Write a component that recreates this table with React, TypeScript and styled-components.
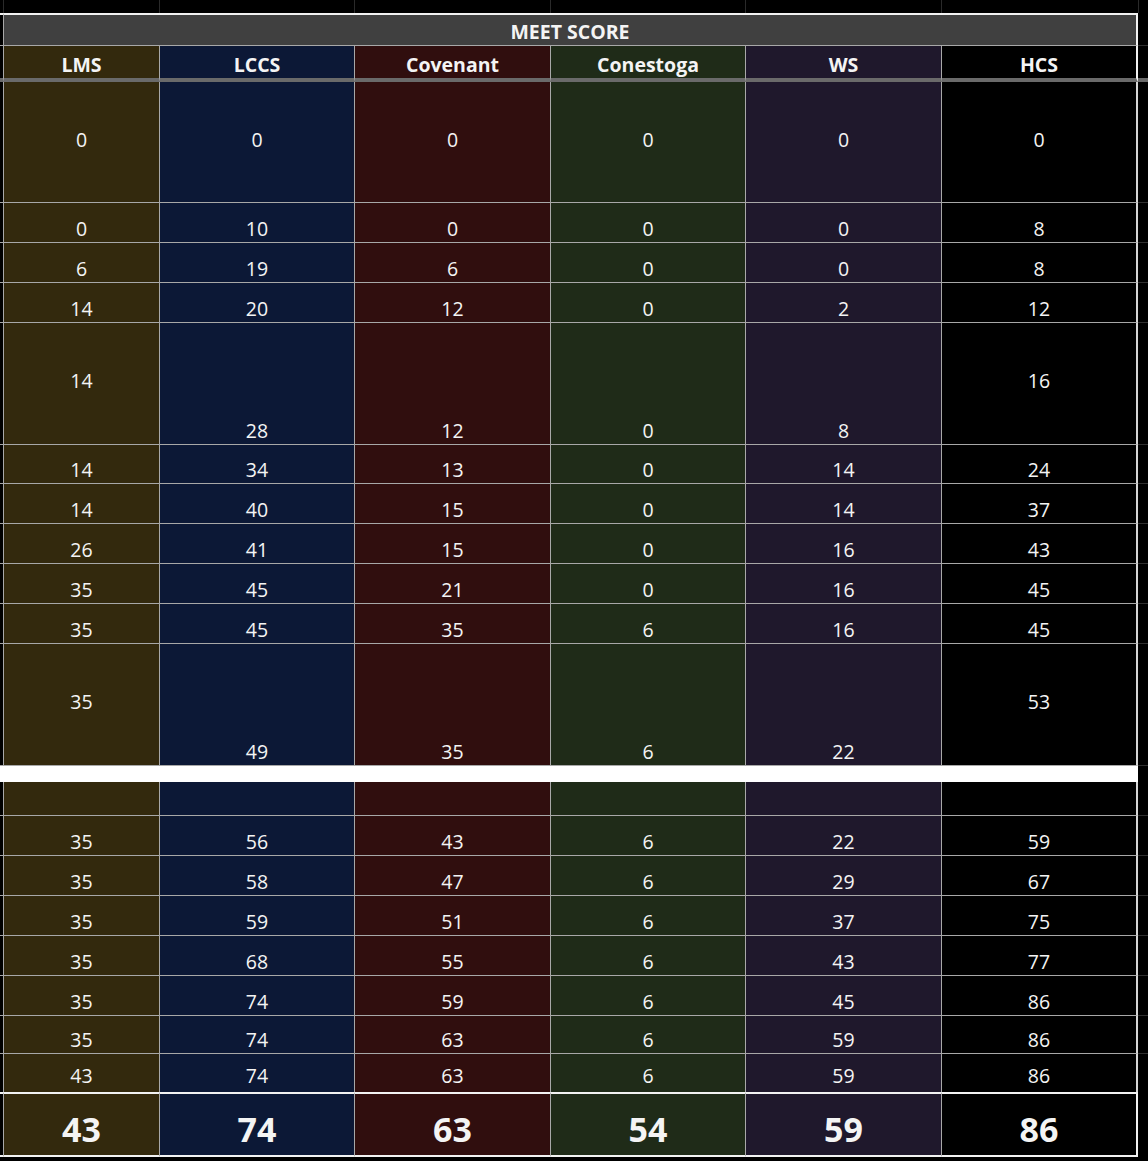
import styled, { createGlobalStyle } from "styled-components";

const GlobalStyle = createGlobalStyle`
  html, body {
    margin: 0;
    padding: 0;
    background: #000;
  }
  body {
    font-family: "Open Sans", "Noto Sans", sans-serif;
    color: #f4f4f4;
  }
`;

const COLS = "3px 156px 195px 196px 195px 196px 197px 10px";
const LINE = "#a8a8a8";
const EDGE = "#f2f2f2";

const teams = [
  { name: "LMS", bg: "#33290d" },
  { name: "LCCS", bg: "#0c1836" },
  { name: "Covenant", bg: "#300e0e" },
  { name: "Conestoga", bg: "#1f2b18" },
  { name: "WS", bg: "#1f182c" },
  { name: "HCS", bg: "#000000" },
];

type ScoreRow = { h: number; vals: (number | null)[]; mid?: "all" | "ends"; open?: boolean };

const before: ScoreRow[] = [
  { h: 121, vals: [0, 0, 0, 0, 0, 0], mid: "all" },
  { h: 40, vals: [0, 10, 0, 0, 0, 8] },
  { h: 40, vals: [6, 19, 6, 0, 0, 8] },
  { h: 40, vals: [14, 20, 12, 0, 2, 12] },
  { h: 122, vals: [14, 28, 12, 0, 8, 16], mid: "ends" },
  { h: 39, vals: [14, 34, 13, 0, 14, 24] },
  { h: 40, vals: [14, 40, 15, 0, 14, 37] },
  { h: 40, vals: [26, 41, 15, 0, 16, 43] },
  { h: 40, vals: [35, 45, 21, 0, 16, 45] },
  { h: 40, vals: [35, 45, 35, 6, 16, 45] },
  { h: 122, vals: [35, 49, 35, 6, 22, 53], mid: "ends" },
];

const after: ScoreRow[] = [
  { h: 34, vals: [null, null, null, null, null, null] },
  { h: 40, vals: [35, 56, 43, 6, 22, 59] },
  { h: 40, vals: [35, 58, 47, 6, 29, 67] },
  { h: 40, vals: [35, 59, 51, 6, 37, 75] },
  { h: 40, vals: [35, 68, 55, 6, 43, 77] },
  { h: 40, vals: [35, 74, 59, 6, 45, 86] },
  { h: 38, vals: [35, 74, 63, 6, 59, 86] },
  { h: 38, vals: [43, 74, 63, 6, 59, 86], open: true },
];

const totals = [43, 74, 63, 54, 59, 86];

const Sheet = styled.div`
  width: 1148px;
  height: 1161px;
  background: #000;
  overflow: hidden;
`;

const Row = styled.div<{ $h: number }>`
  display: grid;
  grid-template-columns: ${COLS};
  height: ${(p) => p.$h}px;
`;

const Gutter = styled.div<{ $top?: string; $bottom?: string }>`
  box-sizing: border-box;
  background: #000;
  border-top: ${(p) => p.$top ?? "none"};
  border-bottom: ${(p) => p.$bottom ?? "none"};
`;

const StripCell = styled.div`
  box-sizing: border-box;
  background: #000;
  border-left: 1px solid #2a2a2a;
`;

const TitleCell = styled.div`
  grid-column: 2 / 8;
  box-sizing: border-box;
  display: flex;
  justify-content: center;
  align-items: flex-end;
  padding-bottom: 1px;
  background: #404040;
  border-top: 2px solid ${EDGE};
  border-left: 1px solid ${LINE};
  border-right: 2px solid ${EDGE};
  border-bottom: 1px solid ${LINE};
  font-size: 19.5px;
  line-height: 24px;
  font-weight: 700;
`;

const HeadCell = styled.div<{ $bg: string }>`
  box-sizing: border-box;
  display: flex;
  justify-content: center;
  align-items: flex-end;
  padding-bottom: 1px;
  background: ${(p) => p.$bg};
  border-left: 1px solid ${LINE};
  border-bottom: 4px solid #6a6a6a;
  font-size: 19.5px;
  line-height: 24px;
  font-weight: 700;
  &:nth-last-child(2) {
    border-right: 2px solid ${EDGE};
  }
`;

const DataCell = styled.div<{ $bg: string; $mid?: boolean; $open?: boolean }>`
  box-sizing: border-box;
  display: flex;
  justify-content: center;
  align-items: ${(p) => (p.$mid ? "center" : "flex-end")};
  padding-bottom: ${(p) => (p.$mid ? 5 : p.$open ? 4 : 1)}px;
  background: ${(p) => p.$bg};
  border-left: 1px solid ${LINE};
  border-bottom: ${(p) => (p.$open ? "none" : `1px solid ${LINE}`)};
  font-size: 19.5px;
  line-height: 24px;
  &:nth-last-child(2) {
    border-right: 2px solid #d6d6d6;
  }
`;

const Band = styled.div`
  grid-column: 1 / 8;
  background: #fff;
`;

const TotalCell = styled.div<{ $bg: string }>`
  box-sizing: border-box;
  display: flex;
  justify-content: center;
  align-items: flex-end;
  padding-bottom: 6px;
  background: ${(p) => p.$bg};
  border-top: 2px solid ${EDGE};
  border-bottom: 2px solid ${EDGE};
  border-left: 1px solid ${LINE};
  font-size: 34px;
  line-height: 40px;
  font-weight: 700;
  &:nth-last-child(2) {
    border-right: 2px solid ${EDGE};
  }
`;

function ScoreLine({ row }: { row: ScoreRow }) {
  const bottom = row.open ? undefined : `1px solid ${LINE}`;
  return (
    <Row $h={row.h}>
      <Gutter $bottom={bottom} />
      {row.vals.map((v, i) => {
        const mid = row.mid === "all" || (row.mid === "ends" && (i === 0 || i === 5));
        return (
          <DataCell key={teams[i].name} $bg={teams[i].bg} $mid={mid} $open={row.open}>
            {v ?? ""}
          </DataCell>
        );
      })}
      <Gutter $bottom={row.open ? undefined : "1px solid #303030"} />
    </Row>
  );
}

export default function App() {
  return (
    <>
      <GlobalStyle />
      <Sheet>
        <Row $h={13}>
          <Gutter />
          {teams.map((t) => (
            <StripCell key={t.name} />
          ))}
          <StripCell />
        </Row>

        <Row $h={33}>
          <Gutter $top={`2px solid ${EDGE}`} $bottom={`1px solid ${LINE}`} />
          <TitleCell>MEET SCORE</TitleCell>
          <Gutter $bottom="1px solid #303030" />
        </Row>

        <Row $h={36}>
          <Gutter $bottom="4px solid #6a6a6a" />
          {teams.map((t) => (
            <HeadCell key={t.name} $bg={t.bg}>
              {t.name}
            </HeadCell>
          ))}
          <Gutter $bottom="4px solid #6a6a6a" />
        </Row>

        {before.map((r, i) => (
          <ScoreLine key={`b${i}`} row={r} />
        ))}

        <Row $h={16}>
          <Band />
          <Gutter />
        </Row>

        {after.map((r, i) => (
          <ScoreLine key={`a${i}`} row={r} />
        ))}

        <Row $h={65}>
          <Gutter $top={`2px solid ${EDGE}`} $bottom={`2px solid ${EDGE}`} />
          {teams.map((t, i) => (
            <TotalCell key={t.name} $bg={t.bg}>
              {totals[i]}
            </TotalCell>
          ))}
          <Gutter />
        </Row>
      </Sheet>
    </>
  );
}
